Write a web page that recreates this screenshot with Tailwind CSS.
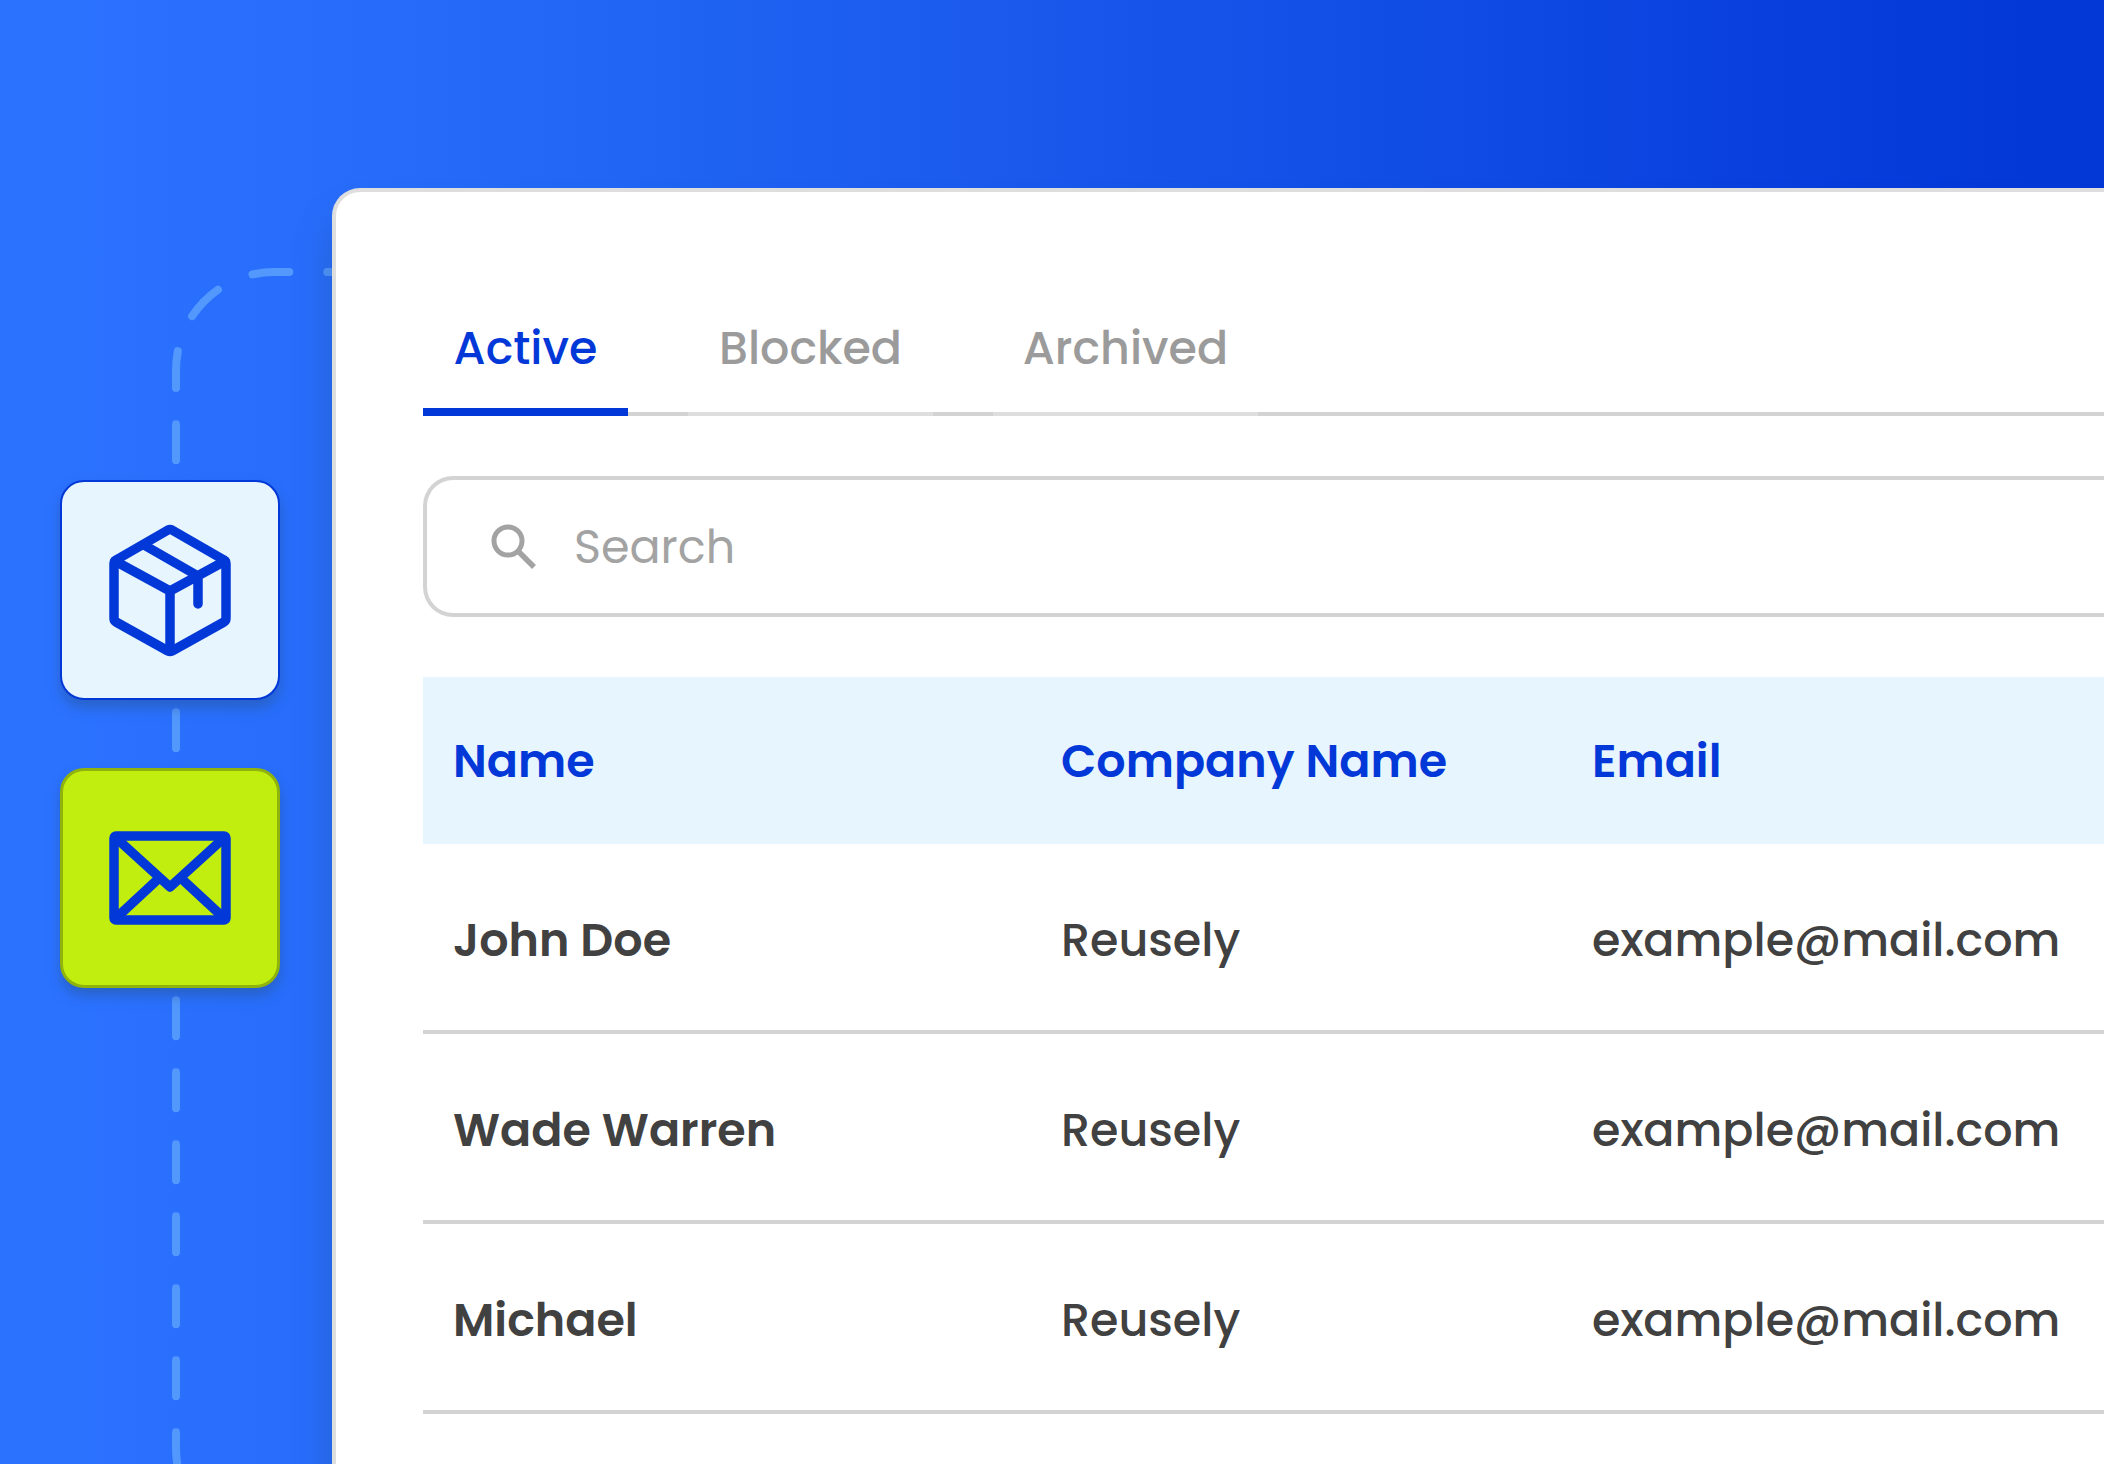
<!DOCTYPE html>
<html lang="en">
<head>
<meta charset="utf-8">
<title>Customers</title>
<script src="https://cdn.jsdelivr.net/npm/@tailwindcss/browser@4"></script>
</head>
<body class="overflow-hidden">
<div class="relative flex h-screen min-h-[600px] overflow-hidden bg-linear-[90deg,#2b72ff_0%,#2b72ff_3%,#276cfa_16%,#2065f4_30%,#1a59ec_48%,#0f4be4_70%,#083edc_86%,#0338d6_97%] font-['Poppins','Inter',sans-serif] text-[46px] leading-[56px] text-[#414141]">

  <!-- Dashed connector behind the tiles and the card -->
  <svg class="absolute top-0 left-0 h-[1480px] w-[400px]" viewBox="0 0 400 1480" fill="none" stroke="#5298fd" stroke-width="8" stroke-linecap="round" aria-hidden="true">
    <path d="M178 1468A98 98 0 0 1 176 1446V424" stroke-dasharray="36 36"/>
    <path d="M176 388V370A98 98 0 0 1 274 272H400" stroke-dasharray="37 38"/>
  </svg>

  <nav class="relative flex w-[332px] shrink-0 flex-col gap-[68px] pt-[480px] pl-[60px]" aria-label="Sections">
    <button type="button" aria-label="Orders" class="flex size-[220px] items-center justify-center rounded-3xl border-2 border-[#0338d8] bg-[#e7f5ff] shadow-[0_8px_12px_#28559880]">
      <svg class="size-[140px]" viewBox="0 0 140 140" fill="none" stroke="#0338d8" stroke-width="9.500" stroke-linecap="round" stroke-linejoin="round">
        <path d="M72 10 L124 40 Q126 41 126 44 V98 Q126 101 124 102 L72 131 Q70 132 68 131 L16 102 Q14 101 14 98 V44 Q14 41 16 40 L68 10 Q70 9 72 10 Z"/>
        <path d="M15 41 L70 71 L125 41 M70 71 V131 M44 25 L98 56 V84"/>
      </svg>
    </button>
    <button type="button" aria-label="Messages" class="flex size-[220px] items-center justify-center rounded-3xl border-3 border-[#8fb20c] bg-[#c1ee0f] shadow-[0_8px_12px_#28559880]">
      <svg class="size-[140px]" viewBox="0 0 140 140" fill="none" stroke="#0338d8" stroke-width="9.500" stroke-linecap="round" stroke-linejoin="round">
        <rect x="14" y="28" width="112" height="84" rx="2"/>
        <path d="M15 29 L70 79 L125 29 M15 111 L56 73 M125 111 L84 73"/>
      </svg>
    </button>
  </nav>

  <main class="relative mt-[188px] min-w-0 flex-1 rounded-tl-[28px] border-t-4 border-l-4 border-[#dedede] bg-white pt-[88px] pl-[87px] shadow-[0_32px_36px_#28559866]">
    <div role="tablist" class="flex h-[136px] items-end gap-[60px] bg-linear-to-t from-[#d3d3d3] from-[4px] to-transparent to-[4px] font-medium">
      <button type="button" role="tab" aria-selected="true" class="h-full w-[205px] border-b-8 border-[#0338d8] pt-2 text-[#0338d8]">Active</button>
      <button type="button" role="tab" aria-selected="false" class="h-full w-[245px] border-b-4 border-[#dedede] pt-1 text-[#9b9b9b]">Blocked</button>
      <button type="button" role="tab" aria-selected="false" class="h-full w-[265px] border-b-4 border-[#dedede] pt-1 text-[#9b9b9b]">Archived</button>
    </div>

    <label class="mt-[60px] flex h-[141px] items-center gap-[35px] rounded-l-[30px] border-4 border-r-0 border-[#d3d3d3] pl-[60px]">
      <svg class="size-[52px]" viewBox="0 0 52 52" fill="none" stroke="#a3a3a3" aria-hidden="true">
        <circle cx="21" cy="20" r="14" stroke-width="5"/>
        <path d="M32 31L47 46" stroke-width="5.500"/>
      </svg>
      <input type="search" placeholder="Search" aria-label="Search" class="min-w-0 flex-1 outline-none placeholder:text-[#a3a3a3]">
    </label>

    <table class="mt-[60px] w-full table-fixed border-separate border-spacing-0 text-left">
      <colgroup><col class="w-[606px]"><col class="w-[531px]"><col></colgroup>
      <thead class="bg-[#e7f5ff] text-[#0338d8]">
        <tr class="h-[167px]">
          <th scope="col" class="pl-[30px] font-semibold">Name</th>
          <th scope="col" class="pl-8 font-semibold">Company Name</th>
          <th scope="col" class="pl-8 font-semibold">Email</th>
        </tr>
      </thead>
      <tbody class="font-medium">
        <tr class="h-[190px]">
          <th scope="row" class="border-b-4 border-[#d3d3d3] pt-1.5 pl-[30px] font-semibold">John Doe</th>
          <td class="border-b-4 border-[#d3d3d3] pt-1.5 pl-8">Reusely</td>
          <td class="border-b-4 border-[#d3d3d3] pt-1.5 pl-8">example@mail.com</td>
        </tr>
        <tr class="h-[190px]">
          <th scope="row" class="border-b-4 border-[#d3d3d3] pt-1.5 pl-[30px] font-semibold">Wade Warren</th>
          <td class="border-b-4 border-[#d3d3d3] pt-1.5 pl-8">Reusely</td>
          <td class="border-b-4 border-[#d3d3d3] pt-1.5 pl-8">example@mail.com</td>
        </tr>
        <tr class="h-[190px]">
          <th scope="row" class="border-b-4 border-[#d3d3d3] pt-1.5 pl-[30px] font-semibold">Michael</th>
          <td class="border-b-4 border-[#d3d3d3] pt-1.5 pl-8">Reusely</td>
          <td class="border-b-4 border-[#d3d3d3] pt-1.5 pl-8">example@mail.com</td>
        </tr>
      </tbody>
    </table>
  </main>
</div>
</body>
</html>
